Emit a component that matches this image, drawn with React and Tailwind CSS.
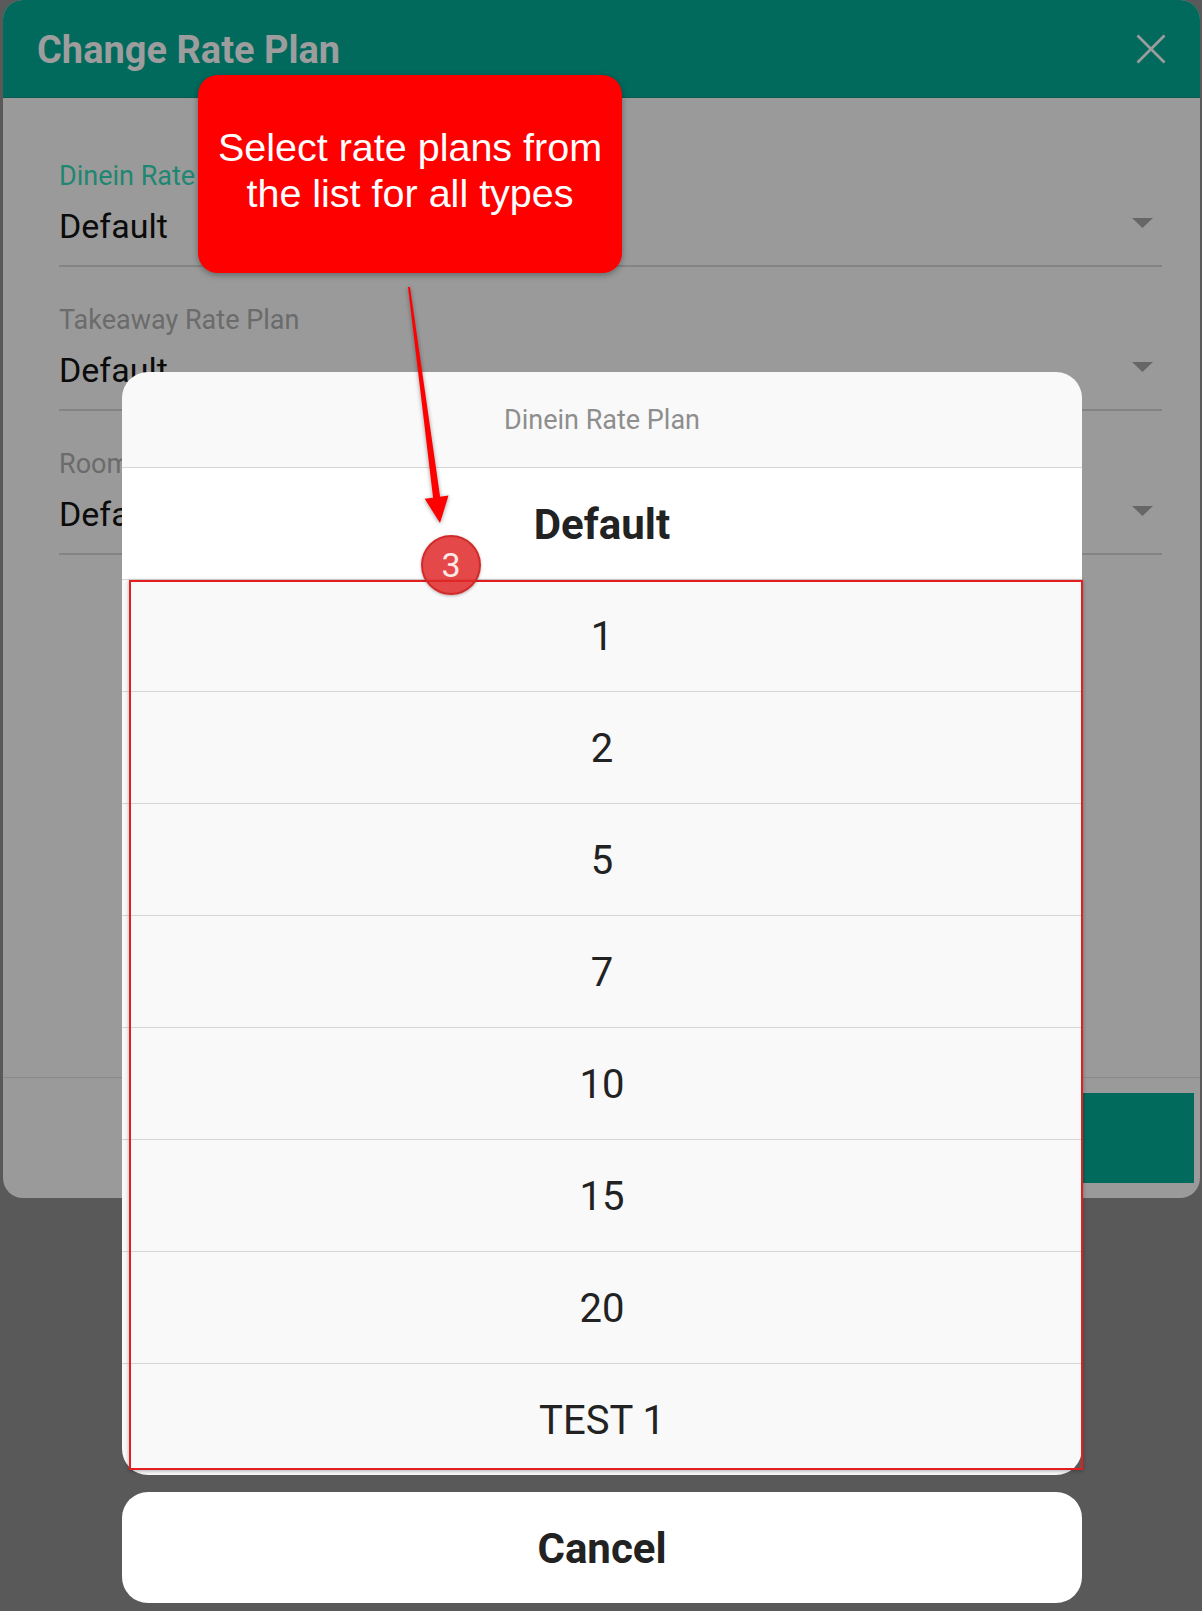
import React from "react";

const fields = [
  { label: "Dinein Rate Plan", active: true },
  { label: "Takeaway Rate Plan" },
  { label: "Room Rate Plan" },
];

const options = ["1", "2", "5", "7", "10", "15", "20", "TEST 1"];

function Caret() {
  return (
    <svg width="21" height="10" viewBox="0 0 21 10" className="mr-[9px] mb-[7px] shrink-0">
      <polygon points="0,0 21,0 10.5,10" fill="#676767" />
    </svg>
  );
}

export default function App() {
  return (
    <div
      className="relative w-[1202px] h-[1611px] bg-[#595959] overflow-hidden"
      style={{ fontFamily: "Roboto, 'Noto Sans', sans-serif" }}
    >
      {/* Dialog */}
      <div className="ml-[3px] w-[1197px] h-[1198px] rounded-[20px] bg-[#9a9a9a] flex flex-col overflow-hidden">
        <div className="h-[98px] shrink-0 bg-[#016a5d] flex items-center justify-between pl-[34px] pr-[34px] border-b border-[#0d5a50]">
          <div className="text-[38px] font-bold text-[#9d9d9d] leading-[44px] mt-[3px]">Change Rate Plan</div>
          <svg width="30" height="30" viewBox="0 0 30 30">
            <line x1="1.5" y1="1.5" x2="28.5" y2="28.5" stroke="#9c9c9c" strokeWidth="2.6" />
            <line x1="28.5" y1="1.5" x2="1.5" y2="28.5" stroke="#9c9c9c" strokeWidth="2.6" />
          </svg>
        </div>
        <div className="flex-1 pl-[56px] pr-[38px] pt-[63px] flex flex-col gap-[38px]">
          {fields.map((f) => (
            <div key={f.label} className="flex flex-col">
              <div
                className={`h-[30px] leading-[30px] text-[27px] ${f.active ? "text-[#1f8672]" : "text-[#6b6b6b]"}`}
              >
                {f.label}
              </div>
              <div className="mt-[15px] pb-[19px] border-b-2 border-[#848484] flex items-center justify-between">
                <div className="h-[40px] leading-[40px] text-[34px] text-[#0b0b0b]">Default</div>
                <Caret />
              </div>
            </div>
          ))}
        </div>
        <div className="h-[121px] shrink-0 border-t border-[#8a8a8a] flex justify-end pt-[15px] pr-[6px]">
          <div className="w-[160px] h-[90px] bg-[#016a5d]" />
        </div>
      </div>

      {/* Action sheet */}
      <div className="absolute left-[122px] top-[372px] w-[960px] flex flex-col gap-[17px]">
        <div className="rounded-[26px] overflow-hidden bg-[#f9f9f9] flex flex-col">
          <div className="h-[96px] flex items-center justify-center text-[27px] text-[#8e8e8e] border-b border-[#d6d6d6] pt-[2px]">
            Dinein Rate Plan
          </div>
          <div className="h-[112px] bg-white border-b border-[#d6d6d6] flex items-center justify-center text-[42px] font-bold text-[#222] pt-[2px]">
            Default
          </div>
          {options.map((o, i) => (
            <div
              key={o}
              className={`${i === options.length - 1 ? "h-[111px]" : "h-[112px] border-b border-[#d6d6d6]"} flex items-center justify-center text-[40px] text-[#222] pt-[2px]`}
            >
              {o}
            </div>
          ))}
        </div>
        <div className="h-[111px] rounded-[26px] bg-white flex items-center justify-center text-[42px] font-bold text-[#222] pt-[1px]">
          Cancel
        </div>
      </div>

      {/* Highlight rectangle */}
      <div className="absolute left-[129px] top-[580px] w-[954px] h-[890px] border-2 border-[#e41e1e] shadow-[0_1px_4px_rgba(0,0,0,0.3)]" />

      {/* Callout */}
      <div
        className="absolute left-[198px] top-[75px] w-[424px] h-[198px] rounded-[20px] bg-[#ff0000] shadow-[0_2px_6px_rgba(0,0,0,0.35)] pt-[49px] text-center text-white text-[39.5px] leading-[46px]"
        style={{ fontFamily: "'Liberation Sans', Arial, sans-serif" }}
      >
        Select rate plans from
        <br />
        the list for all types
      </div>

      {/* Arrow */}
      <svg
        className="absolute left-[400px] top-[280px] drop-shadow-[0_1px_2px_rgba(0,0,0,0.4)]"
        width="60"
        height="250"
        viewBox="0 0 60 250"
      >
        <polygon
          points="8,7.1 10,6.9 40.1,216.7 48.5,215.6 40,243 24.7,218.8 33.1,217.7"
          fill="#ff0000"
        />
      </svg>

      {/* Badge */}
      <div
        className="absolute left-[421px] top-[535px] w-[60px] h-[60px] rounded-full bg-[#e02828]/85 border-2 border-[#d02a2a] flex items-center justify-center text-[34px] text-[#fde8e8] shadow-[0_1px_3px_rgba(0,0,0,0.3)]"
        style={{ fontFamily: "Roboto, sans-serif" }}
      >
        3
      </div>
    </div>
  );
}
